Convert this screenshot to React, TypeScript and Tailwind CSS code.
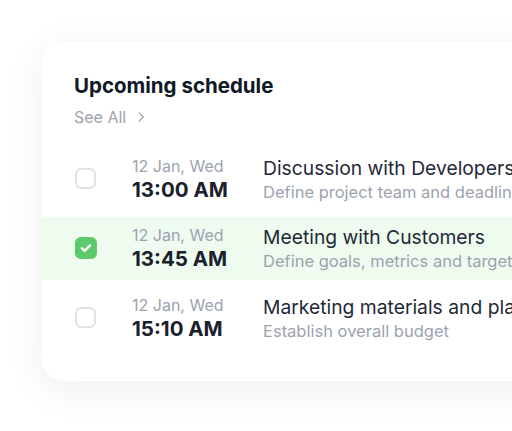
import React from "react";

const items = [
  { date: "12 Jan, Wed", time: "13:00 AM", title: "Discussion with Developers", desc: "Define project team and deadlines", done: false },
  { date: "12 Jan, Wed", time: "13:45 AM", title: "Meeting with Customers", desc: "Define goals, metrics and targets", done: true },
  { date: "12 Jan, Wed", time: "15:10 AM", title: "Marketing materials and plan", desc: "Establish overall budget", done: false },
];

function Check({ done }: { done: boolean }) {
  if (!done) {
    return <div className="w-[21px] h-[21px] rounded-[6px] border-2 border-[#dfe2e6] bg-white shrink-0" />;
  }
  return (
    <div className="w-[22px] h-[22px] rounded-[6px] bg-[#5ccb6b] flex items-center justify-center shrink-0">
      <svg width="14" height="14" viewBox="0 0 24 24" fill="none" stroke="white" strokeWidth="4" strokeLinecap="round" strokeLinejoin="round">
        <path d="M5 12.5l4.5 4.5L19 7.5" />
      </svg>
    </div>
  );
}

export default function App() {
  return (
    <div className="w-[512px] h-[431px] overflow-hidden bg-white" style={{ fontFamily: "Inter, 'Noto Sans', sans-serif" }}>
      <div className="ml-[42px] mt-[42px] w-[560px] rounded-[22px] bg-white shadow-[0_8px_40px_rgba(20,30,60,0.07)] pt-[30px] pb-[32px]">
        <div className="px-8">
          <h2 className="text-[20.5px] leading-[28px] font-bold text-[#111827]">Upcoming schedule</h2>
          <div className="mt-[6px] flex items-center gap-[8px] text-[16px] leading-[22px] text-[#9ca3af]">
            See All
            <svg width="14" height="14" viewBox="0 0 24 24" fill="none" stroke="currentColor" strokeWidth="2.2" strokeLinecap="round" strokeLinejoin="round">
              <path d="M9 5l7 7-7 7" />
            </svg>
          </div>
        </div>
        <div className="mt-[19px] flex flex-col gap-[6.5px]">
          {items.map((it) => (
            <div key={it.time} className={`h-[63px] flex items-center pl-[33px] ${it.done ? "bg-[#eefbef]" : ""}`}>
              <Check done={it.done} />
              <div className={`${it.done ? "ml-[35px]" : "ml-[36px]"} w-[131px] shrink-0`}>
                <div className="text-[16px] leading-[22px] text-[#9ca3af]">{it.date}</div>
                <div className="text-[20.5px] leading-[26px] font-bold text-[#1a202c]">{it.time}</div>
              </div>
              <div className="whitespace-nowrap">
                <div className="text-[19.3px] leading-[26px] text-[#1f2937]">{it.title}</div>
                <div className="text-[16.5px] leading-[22px] text-[#9ca3af]">{it.desc}</div>
              </div>
            </div>
          ))}
        </div>
      </div>
    </div>
  );
}
